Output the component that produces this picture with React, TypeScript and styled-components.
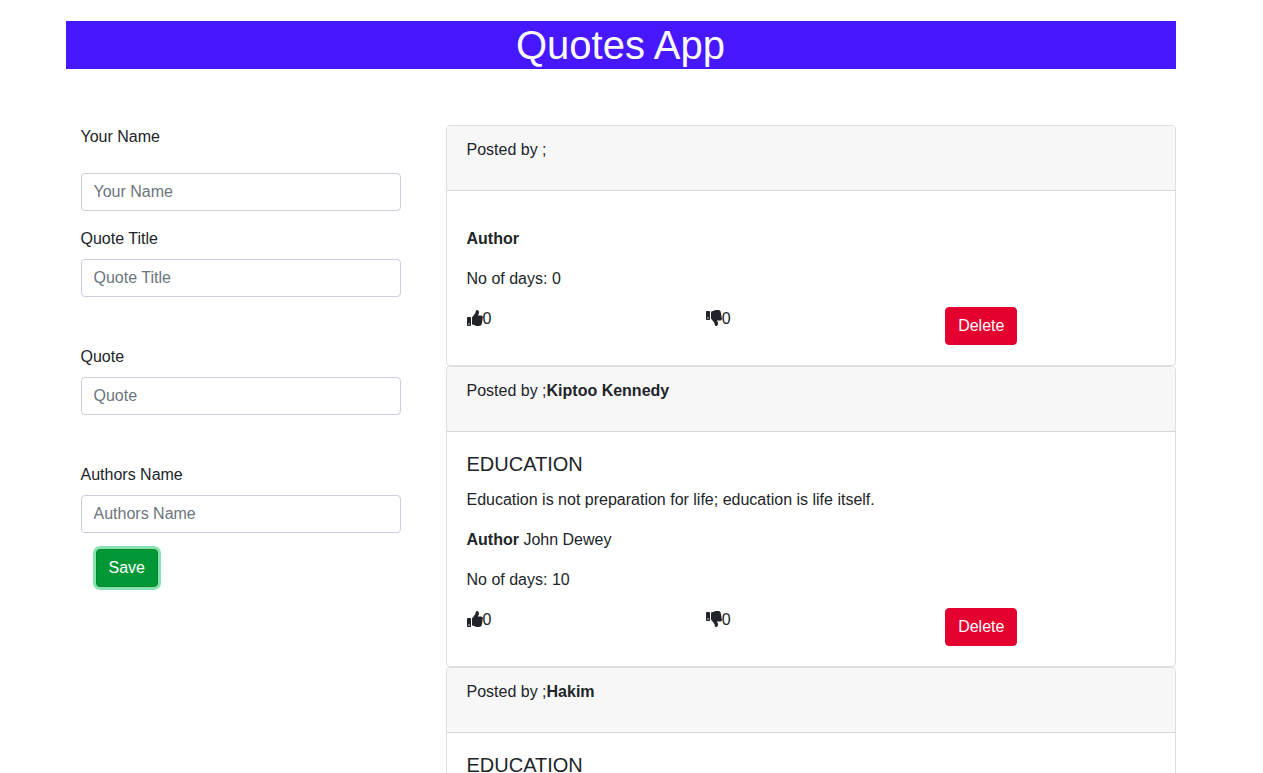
import React, { useState } from "react";
import styled, { createGlobalStyle } from "styled-components";
import { FaThumbsUp, FaThumbsDown } from "react-icons/fa";

const GlobalStyle = createGlobalStyle`
  *, *::before, *::after { box-sizing: border-box; }
  body {
    margin: 0;
    padding-right: 22px;
    background: #fff;
    color: #212529;
    font: 400 16px/24px "Liberation Sans", Arial, sans-serif;
  }
`;

const Container = styled.div`
  width: 100%;
  max-width: 1140px;
  margin: 0 auto;
  padding: 21px 15px 0;
`;

const Banner = styled.h1`
  margin: 0 0 56px;
  background: #4617ff;
  color: #f8f9fa;
  font-size: 40px;
  font-weight: 400;
  line-height: 48px;
  text-align: center;
`;

const Columns = styled.main`
  display: grid;
  grid-template-columns: minmax(0, 350fr) minmax(0, 730fr);
  column-gap: 30px;
  align-items: start;
`;

const Form = styled.form`
  padding: 0 15px;
`;

const Field = styled.div<{ $labelGap: number; $after: number }>`
  display: flex;
  flex-direction: column;
  gap: ${(p) => p.$labelGap}px;
  margin-bottom: ${(p) => p.$after}px;
`;

const TextInput = styled.input`
  width: 100%;
  height: 38px;
  padding: 6px 12px;
  border: 1px solid #cbcfdb;
  border-radius: 4px;
  background: #fff;
  color: #495057;
  font: inherit;
  &::placeholder {
    color: #6c757d;
    opacity: 1;
  }
`;

const Button = styled.button`
  padding: 6px 12px;
  border: 1px solid transparent;
  border-radius: 4px;
  color: #fff;
  font: inherit;
  cursor: pointer;
`;

const SaveButton = styled(Button)`
  margin-left: 15px;
  border-color: #008a2e;
  background: #009837;
  box-shadow: 0 0 0 3px #8ae2b0;
`;

const DeleteButton = styled(Button)`
  border-color: #e4002f;
  background: #e4002f;
`;

const Card = styled.article`
  border: 1px solid #dfdfdf;
  border-radius: 4px;
  background: #fff;
`;

const CardHeader = styled.header`
  padding: 12px 20px;
  border-bottom: 1px solid #d8d8d8;
  border-radius: 3px 3px 0 0;
  background: #f7f7f7;
`;

const CardBody = styled.div`
  display: flow-root;
  padding: 20px;
`;

const Title = styled.h5`
  margin: 0 0 12px;
  font-size: 20px;
  font-weight: 400;
  line-height: 24px;
`;

const Text = styled.p`
  margin: 0 0 16px;
`;

const Actions = styled.div`
  display: grid;
  grid-template-columns: repeat(3, minmax(0, 1fr));
  column-gap: 30px;
  align-items: start;
  justify-items: start;
`;

const VoteButton = styled.button`
  padding: 0;
  border: 0;
  background: none;
  color: inherit;
  font: inherit;
  cursor: pointer;
  svg {
    vertical-align: -2px;
  }
`;

interface Quote {
  id: number;
  poster: string;
  title: string;
  text: string;
  author: string;
  days: number;
  up: number;
  down: number;
}

const initialQuotes: Quote[] = [
  { id: 1, poster: "", title: "", text: "", author: "", days: 0, up: 0, down: 0 },
  {
    id: 2,
    poster: "Kiptoo Kennedy",
    title: "EDUCATION",
    text: "Education is not preparation for life; education is life itself.",
    author: "John Dewey",
    days: 10,
    up: 0,
    down: 0,
  },
  { id: 3, poster: "Hakim", title: "EDUCATION", text: "", author: "", days: 0, up: 0, down: 0 },
];

const fields = [
  { name: "poster", label: "Your Name", labelGap: 24, after: 16 },
  { name: "title", label: "Quote Title", labelGap: 8, after: 48 },
  { name: "text", label: "Quote", labelGap: 8, after: 48 },
  { name: "author", label: "Authors Name", labelGap: 8, after: 16 },
];

export default function App() {
  const [quotes, setQuotes] = useState<Quote[]>(initialQuotes);

  const vote = (id: number, key: "up" | "down") =>
    setQuotes((list) => list.map((q) => (q.id === id ? { ...q, [key]: q[key] + 1 } : q)));

  const save = (event: React.FormEvent<HTMLFormElement>) => {
    event.preventDefault();
    const data = new FormData(event.currentTarget);
    const value = (name: string) => String(data.get(name) ?? "");
    setQuotes((list) => [
      {
        id: Date.now(),
        poster: value("poster"),
        title: value("title"),
        text: value("text"),
        author: value("author"),
        days: 0,
        up: 0,
        down: 0,
      },
      ...list,
    ]);
    event.currentTarget.reset();
  };

  return (
    <>
      <GlobalStyle />
      <Container>
        <Banner>Quotes App</Banner>
        <Columns>
          <Form onSubmit={save}>
            {fields.map((f) => (
              <Field key={f.name} $labelGap={f.labelGap} $after={f.after}>
                <label htmlFor={f.name}>{f.label}</label>
                <TextInput id={f.name} name={f.name} type="text" placeholder={f.label} />
              </Field>
            ))}
            <SaveButton type="submit">Save</SaveButton>
          </Form>
          <section>
            {quotes.map((q) => (
              <Card key={q.id}>
                <CardHeader>
                  <Text>
                    Posted by ;<b>{q.poster}</b>
                  </Text>
                </CardHeader>
                <CardBody>
                  <Title>{q.title}</Title>
                  <Text>{q.text}</Text>
                  <Text>
                    <b>Author</b> {q.author}
                  </Text>
                  <Text>No of days: {q.days}</Text>
                  <Actions>
                    <VoteButton type="button" onClick={() => vote(q.id, "up")}>
                      <FaThumbsUp />
                      {q.up}
                    </VoteButton>
                    <VoteButton type="button" onClick={() => vote(q.id, "down")}>
                      <FaThumbsDown />
                      {q.down}
                    </VoteButton>
                    <DeleteButton
                      type="button"
                      onClick={() => setQuotes((list) => list.filter((item) => item.id !== q.id))}
                    >
                      Delete
                    </DeleteButton>
                  </Actions>
                </CardBody>
              </Card>
            ))}
          </section>
        </Columns>
      </Container>
    </>
  );
}
